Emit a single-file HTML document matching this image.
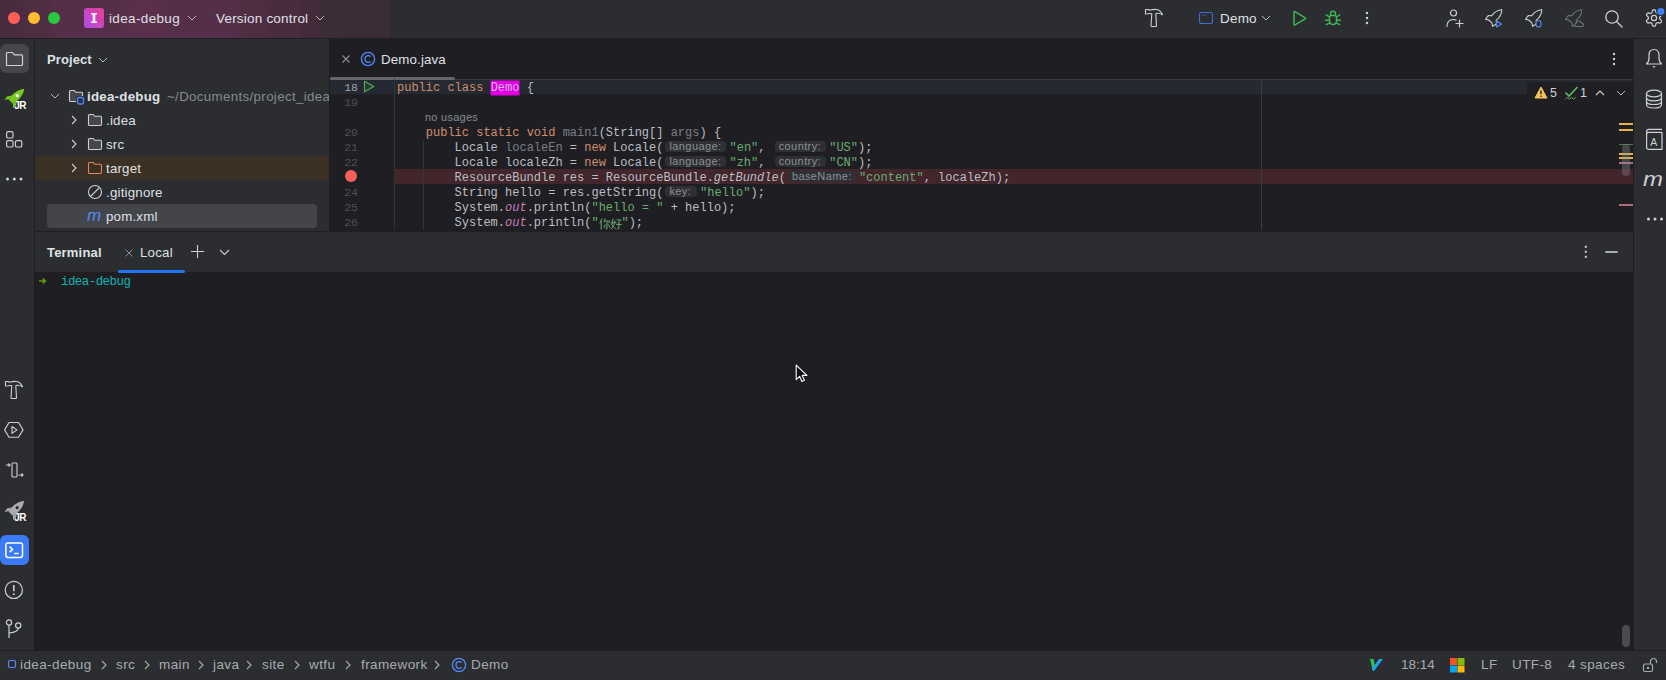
<!DOCTYPE html>
<html><head><meta charset="utf-8">
<style>
*{margin:0;padding:0;box-sizing:border-box}
html,body{width:1666px;height:680px;overflow:hidden;background:#1E1F22;font-family:"Liberation Sans",sans-serif;font-size:13px;color:#DFE1E5}
.a{position:absolute}
.mono{font-family:"Liberation Mono",monospace}
svg{position:absolute;overflow:visible}
#title{left:0;top:0;width:1666px;height:38px;background:#2B2D30}
#tgrad{left:0;top:0;width:390px;height:38px;background:radial-gradient(circle at 145px 19px,#5c304c 0px,#5a2f4b 18px,#552f49 24px,#552f49 88px,#4f2e44 98px,#4f2e44 115px,#4a2c40 124px,#4a2c40 150px,#452a3b 160px,#452a3b 170px,#3b2c37 180px,#3a2c36 245px)}
#tline{left:0;top:38px;width:1666px;height:1px;background:#1E1F22}
#lstrip{left:0;top:39px;width:34px;height:612px;background:#2B2D30}
#lline{left:34px;top:39px;width:1px;height:612px;background:#1E1F22}
#proj{left:35px;top:39px;width:294px;height:192px;background:#2B2D30}
#pline{left:329px;top:39px;width:1px;height:192px;background:#1E1F22}
#editor{left:330px;top:39px;width:1303px;height:192px;background:#1F1F23}
#rstrip{left:1634px;top:39px;width:32px;height:612px;background:#2B2D30}
#rline{left:1633px;top:39px;width:1px;height:612px;background:#1E1F22}
#hline{left:35px;top:231px;width:1598px;height:1px;background:#1E1F22}
#thead{left:35px;top:232px;width:1598px;height:40px;background:#2B2D30}
#tbody{left:35px;top:272px;width:1598px;height:379px;background:#1F1F23}
#status{left:0;top:651px;width:1666px;height:29px;background:#2B2D30}
#sline{left:0;top:650px;width:1666px;height:1px;background:#1E1F22}
.code{font-size:12px;line-height:15px;white-space:pre;color:#BCBEC4}
.hint{display:inline-block;position:relative;top:-2px;height:15px;vertical-align:top}
.hint::before{content:"";position:absolute;left:2px;right:3px;top:2px;bottom:2px;background:#2E3034;border-radius:4px;z-index:-1}
.code{z-index:1}
.hint{font-family:"Liberation Sans",sans-serif;font-size:11px;letter-spacing:0.4px;color:#8C8F94;text-indent:6px}
.hint{line-height:15px}
.cjk{display:inline-block;width:28.8px;height:15px;vertical-align:top}
.crumb{top:657px;font-size:13.5px;line-height:16px;color:#A8ABB0;white-space:nowrap;letter-spacing:0.4px}
</style></head><body>
<div id="title" class="a"></div>
<div id="tgrad" class="a"></div>
<div id="tline" class="a"></div>
<div id="lstrip" class="a"></div>
<div id="lline" class="a"></div>
<div id="proj" class="a"></div>
<div id="pline" class="a"></div>
<div id="editor" class="a"></div>
<div id="rstrip" class="a"></div>
<div id="rline" class="a"></div>
<div id="hline" class="a"></div>
<div id="thead" class="a"></div>
<div id="tbody" class="a"></div>
<div id="sline" class="a"></div>
<div id="status" class="a"></div>

<!-- title bar -->
<div class="a" style="left:8px;top:12px;width:12px;height:12px;border-radius:6px;background:#FF5F57"></div>
<div class="a" style="left:28px;top:12px;width:12px;height:12px;border-radius:6px;background:#FEBC2E"></div>
<div class="a" style="left:48px;top:12px;width:12px;height:12px;border-radius:6px;background:#28C840"></div>
<div class="a" style="left:84px;top:8px;width:20px;height:20px;border-radius:3px;background:linear-gradient(45deg,#B449D6 0%,#BC4AD6 30%,#CB4AD6 31%,#C548C6 50%,#D040B4 51%,#D640A8 75%,#DE44A6 76%,#E03FA0 100%)"></div>
<svg style="left:84px;top:8px" width="20" height="20"><path d="M7 5 L13 5 L13 6.4 L11.3 6.6 L11.3 13.4 L13 13.6 L13 15 L7 15 L7 13.6 L8.7 13.4 L8.7 6.6 L7 6.4 Z" fill="#FBEFFB"/></svg>
<div class="a" style="left:109px;top:11px;font-size:13.5px;letter-spacing:0.35px;line-height:16px">idea-debug</div>
<svg style="left:187px;top:15px" width="10" height="6"><path d="M1 1 L5 5 L9 1" fill="none" stroke="#B8BBC0" stroke-width="1"/></svg>
<div class="a" style="left:216px;top:11px;font-size:13.5px;letter-spacing:0.2px;line-height:16px">Version control</div>
<svg style="left:315px;top:15px" width="10" height="6"><path d="M1 1 L5 5 L9 1" fill="none" stroke="#B8BBC0" stroke-width="1"/></svg>

<!-- left strip -->
<div class="a" style="left:0px;top:44px;width:29px;height:29px;border-radius:6px;background:#45474C"></div>
<svg style="left:5px;top:51px" width="20" height="17"><path d="M1.5 13.5 L1.5 2.5 Q1.5 1.5 2.5 1.5 L7.5 1.5 L9.3 3.8 L16.5 3.8 Q17.5 3.8 17.5 4.8 L17.5 13.5 Q17.5 14.5 16.5 14.5 L2.5 14.5 Q1.5 14.5 1.5 13.5 Z" fill="none" stroke="#CED0D6" stroke-width="1.2" stroke-linejoin="round"/></svg>
<!-- JR rocket green -->
<svg style="left:0px;top:84px" width="30" height="30" viewBox="0 0 30 30">
<path d="M24.2 4.8 Q17.5 5.5 11.5 11.5 L8.5 15.5 L13 20 L17 17 Q23.5 11.5 24.2 4.8 Z" fill="#76C81F"/>
<path d="M11.5 11.5 L7 12.5 L4.5 16 L9 15 Z M17 17 L16 21.5 L13 24 L13 20 Z" fill="#76C81F"/>
<circle cx="17.2" cy="11.7" r="1.6" fill="#fff"/>
<text x="14.2" y="25.2" font-family="Liberation Sans" font-weight="bold" font-size="10" fill="#fff" letter-spacing="-0.5">JR</text>
</svg>
<!-- structure -->
<svg style="left:5px;top:130px" width="20" height="20"><g fill="none" stroke="#CED0D6" stroke-width="1.2"><rect x="1.6" y="1.6" width="6.4" height="6.4" rx="1.6"/><rect x="1.6" y="10.6" width="6.4" height="6.4" rx="1.6"/><rect x="10.4" y="10.6" width="6.4" height="6.4" rx="1.6"/></g></svg>
<svg style="left:5px;top:177px" width="20" height="4"><circle cx="2.5" cy="2" r="1.5" fill="#CED0D6"/><circle cx="9.3" cy="2" r="1.5" fill="#CED0D6"/><circle cx="16" cy="2" r="1.5" fill="#CED0D6"/></svg>
<!-- bottom icons -->
<svg style="left:0px;top:375px" width="30" height="30"><path d="M5.5 6.5 L8 6.5 Q9 7.3 10.5 7 Q13 6.2 16.5 6.5 Q20.5 7 22.5 11.8 Q19.5 10 17 10.3 L15.8 10.8 L16.5 22.8 Q16.5 23.5 15.8 23.5 L11.7 23.5 Q11 23.5 11 22.8 L11.8 10.8 Q10 10.2 8 10.8 L5.5 11 Z" fill="none" stroke="#CED0D6" stroke-width="1.1" stroke-linejoin="round"/></svg>
<svg style="left:4px;top:421px" width="22" height="18"><path d="M5 1.5 L14.5 1.5 L19 8.9 L14.5 16.3 L5 16.3 L0.6 8.9 Z" fill="none" stroke="#CED0D6" stroke-width="1.1" stroke-linejoin="round"/><path d="M8 5.5 L13 8.9 L8 12.3 Z" fill="none" stroke="#CED0D6" stroke-width="1.1" stroke-linejoin="round"/></svg>
<svg style="left:5px;top:461px" width="20" height="18"><rect x="7" y="2" width="5" height="14" rx="1" fill="none" stroke="#CED0D6" stroke-width="1.1"/><path d="M1 4 L5 4 M3.5 2.5 L5 4 L3.5 5.5 M13.5 14 L18 14 M16.5 12.5 L18 14 L16.5 15.5" fill="none" stroke="#CED0D6" stroke-width="1.1"/></svg>
<svg style="left:0px;top:496px" width="30" height="30" viewBox="0 0 30 30">
<path d="M24.2 4.8 Q17.5 5.5 11.5 11.5 L8.5 15.5 L13 20 L17 17 Q23.5 11.5 24.2 4.8 Z" fill="#A9ABB1"/>
<path d="M11.5 11.5 L7 12.5 L4.5 16 L9 15 Z M17 17 L16 21.5 L13 24 L13 20 Z" fill="#A9ABB1"/>
<circle cx="17.2" cy="11.7" r="1.6" fill="#2B2D30"/>
<text x="14.2" y="25.2" font-family="Liberation Sans" font-weight="bold" font-size="10" fill="#fff" letter-spacing="-0.5">JR</text>
</svg>
<div class="a" style="left:0px;top:535px;width:29px;height:29.5px;border-radius:6px;background:#3A7AF5"></div>
<svg style="left:5px;top:542px" width="19" height="17"><rect x="0.9" y="0.9" width="16.6" height="14.6" rx="2.2" fill="none" stroke="#FFFFFF" stroke-width="1.5"/><path d="M4.6 4.6 L7.6 7.4 L4.6 10.2 M9.2 11.4 L13.6 11.4" fill="none" stroke="#FFFFFF" stroke-width="1.5"/></svg>
<svg style="left:4px;top:580px" width="20" height="20"><circle cx="9.8" cy="9.9" r="8.6" fill="none" stroke="#CED0D6" stroke-width="1.2"/><path d="M9.8 5 L9.8 11.2" stroke="#CED0D6" stroke-width="1.6"/><circle cx="9.8" cy="14.3" r="1" fill="#CED0D6"/></svg>
<svg style="left:4px;top:618px" width="22" height="22"><g fill="none" stroke="#CED0D6" stroke-width="1.2"><circle cx="5" cy="4.5" r="2.6"/><circle cx="14.2" cy="7.5" r="2.6"/><path d="M5 7.1 L5 20 M14.2 10.1 Q14.2 14.5 5 15"/></g></svg>

<!-- project panel -->
<div class="a" style="left:47px;top:52px;font-size:13px;font-weight:bold;line-height:16px;letter-spacing:0.1px">Project</div>
<svg style="left:98px;top:57px" width="10" height="6"><path d="M1 1 L5 5 L9 1" fill="none" stroke="#B8BBC0" stroke-width="1"/></svg>
<div class="a" style="left:35px;top:156px;width:294px;height:24px;background:#3A3024"></div>
<div class="a" style="left:47px;top:204px;width:270px;height:24px;border-radius:4px;background:#43454A"></div>
<svg style="left:50px;top:93px" width="10" height="6"><path d="M1 1 L5 5 L9 1" fill="none" stroke="#B8BBC0" stroke-width="1"/></svg>
<svg style="left:68px;top:89px" width="18" height="17"><path d="M1.5 11 L1.5 2.5 Q1.5 1.5 2.5 1.5 L6.3 1.5 L7.8 3.3 L13.5 3.3 Q14.5 3.3 14.5 4.3 L14.5 11 Q14.5 12.5 13.5 12.5 L2.5 12.5 Q1.5 12.5 1.5 11.5 Z" fill="#45474C" stroke="#CED0D6" stroke-width="1.1" stroke-linejoin="round"/><rect x="8" y="7" width="9" height="9" rx="2" fill="#2B2D30"/><rect x="9.5" y="8.5" width="6" height="6.5" rx="1.5" fill="#25324D" stroke="#548AF7" stroke-width="1.3"/></svg>
<div class="a" style="left:87px;top:89px;font-size:13.3px;font-weight:bold;line-height:16px;letter-spacing:0.25px">idea-debug</div>
<div class="a" style="left:167px;top:89px;width:162px;overflow:hidden;white-space:nowrap;font-size:13.3px;line-height:16px;color:#868A91;letter-spacing:0.35px">~/Documents/project_idea</div>
<svg style="left:71px;top:115px" width="6" height="10"><path d="M1 1 L5 5 L1 9" fill="none" stroke="#CED0D6" stroke-width="1.1"/></svg>
<svg style="left:87px;top:113px" width="16" height="15"><path d="M1.5 11 L1.5 2.5 Q1.5 1.5 2.5 1.5 L6.3 1.5 L7.8 3.3 L13.5 3.3 Q14.5 3.3 14.5 4.3 L14.5 11 Q14.5 12.5 13.5 12.5 L2.5 12.5 Q1.5 12.5 1.5 11.5 Z" fill="#45474C" stroke="#CED0D6" stroke-width="1.1" stroke-linejoin="round"/></svg>
<div class="a" style="left:106px;top:113px;font-size:13.3px;line-height:16px;letter-spacing:0.2px">.idea</div>
<svg style="left:71px;top:139px" width="6" height="10"><path d="M1 1 L5 5 L1 9" fill="none" stroke="#CED0D6" stroke-width="1.1"/></svg>
<svg style="left:87px;top:137px" width="16" height="15"><path d="M1.5 11 L1.5 2.5 Q1.5 1.5 2.5 1.5 L6.3 1.5 L7.8 3.3 L13.5 3.3 Q14.5 3.3 14.5 4.3 L14.5 11 Q14.5 12.5 13.5 12.5 L2.5 12.5 Q1.5 12.5 1.5 11.5 Z" fill="#45474C" stroke="#CED0D6" stroke-width="1.1" stroke-linejoin="round"/></svg>
<div class="a" style="left:106px;top:137px;font-size:13.3px;line-height:16px;letter-spacing:0.2px">src</div>
<svg style="left:71px;top:163px" width="6" height="10"><path d="M1 1 L5 5 L1 9" fill="none" stroke="#CED0D6" stroke-width="1.1"/></svg>
<svg style="left:87px;top:161px" width="16" height="15"><path d="M1.5 11 L1.5 2.5 Q1.5 1.5 2.5 1.5 L6.3 1.5 L7.8 3.3 L13.5 3.3 Q14.5 3.3 14.5 4.3 L14.5 11 Q14.5 12.5 13.5 12.5 L2.5 12.5 Q1.5 12.5 1.5 11.5 Z" fill="#3A3024" stroke="#E08855" stroke-width="1.1" stroke-linejoin="round"/></svg>
<div class="a" style="left:106px;top:161px;font-size:13.3px;line-height:16px;letter-spacing:0.2px">target</div>
<svg style="left:87px;top:184px" width="16" height="16"><circle cx="8" cy="8" r="6.5" fill="none" stroke="#CED0D6" stroke-width="1.1"/><path d="M3.5 12.5 L12.5 3.5" stroke="#CED0D6" stroke-width="1.1"/></svg>
<div class="a" style="left:106px;top:185px;font-size:13.3px;line-height:16px;letter-spacing:0.2px">.gitignore</div>
<div class="a" style="left:87px;top:207px;font-size:17px;font-style:italic;line-height:18px;color:#548AF7;letter-spacing:-0.5px">m</div>
<div class="a" style="left:106px;top:209px;font-size:13.3px;line-height:16px;letter-spacing:0.2px">pom.xml</div>

<!-- editor tabs -->
<svg style="left:341px;top:54px" width="10" height="10"><path d="M1.5 1.5 L8.5 8.5 M8.5 1.5 L1.5 8.5" stroke="#8C8F94" stroke-width="1.1"/></svg>
<svg style="left:360px;top:51px" width="16" height="16"><circle cx="8" cy="8" r="6.6" fill="none" stroke="#548AF7" stroke-width="1.3"/><path d="M10.6 5.6 Q9.8 4.6 8.2 4.6 Q5 4.6 5 8 Q5 11.4 8.2 11.4 Q9.8 11.4 10.6 10.4" fill="none" stroke="#548AF7" stroke-width="1.3"/></svg>
<div class="a" style="left:381px;top:52px;font-size:13.3px;line-height:16px;letter-spacing:0.15px">Demo.java</div>
<svg style="left:1612px;top:52px" width="4" height="14"><circle cx="2" cy="2" r="1.2" fill="#CED0D6"/><circle cx="2" cy="7" r="1.2" fill="#CED0D6"/><circle cx="2" cy="12" r="1.2" fill="#CED0D6"/></svg>
<div class="a" style="left:330px;top:79px;width:1303px;height:1px;background:#393B40"></div>
<div class="a" style="left:330px;top:77px;width:125px;height:3px;border-radius:1.5px;background:#62656B"></div>
<!-- current line / breakpoint line -->
<div class="a" style="left:330px;top:80px;width:1303px;height:14px;background:#252932"></div>
<div class="a" style="left:395px;top:169px;width:1238px;height:15px;background:#42262C"></div>
<div class="a" style="left:394px;top:79px;width:1px;height:151px;background:#313438"></div>
<div class="a" style="left:423px;top:140px;width:1px;height:90px;background:#313438"></div>
<div class="a" style="left:1261px;top:79px;width:1px;height:151px;background:#393B40"></div>
<div class="a mono" style="left:335px;top:80px;width:23px;text-align:right;font-size:11.5px;line-height:15px;color:#A1A3AB">18</div>
<div class="a mono" style="left:335px;top:95px;width:23px;text-align:right;font-size:11.5px;line-height:15px;color:#4B5059">19</div>
<div class="a mono" style="left:335px;top:125px;width:23px;text-align:right;font-size:11.5px;line-height:15px;color:#4B5059">20</div>
<div class="a mono" style="left:335px;top:140px;width:23px;text-align:right;font-size:11.5px;line-height:15px;color:#4B5059">21</div>
<div class="a mono" style="left:335px;top:155px;width:23px;text-align:right;font-size:11.5px;line-height:15px;color:#4B5059">22</div>
<div class="a mono" style="left:335px;top:185px;width:23px;text-align:right;font-size:11.5px;line-height:15px;color:#4B5059">24</div>
<div class="a mono" style="left:335px;top:200px;width:23px;text-align:right;font-size:11.5px;line-height:15px;color:#4B5059">25</div>
<div class="a mono" style="left:335px;top:215px;width:23px;text-align:right;font-size:11.5px;line-height:15px;color:#4B5059">26</div>
<svg style="left:363px;top:80px" width="13" height="13"><path d="M1.5 1.3 L10.8 6.5 L1.5 11.7 Z" fill="#253D2C" stroke="#57A860" stroke-width="1.1" stroke-linejoin="round"/></svg>
<div class="a" style="left:345px;top:170px;width:12px;height:12px;border-radius:6px;background:#F55F5A"></div>
<div class="a mono code" style="left:397px;top:81px"><span style="color:#CF8E6D;">public class </span><span style="background:#E100E1;color:#D8B4E6;box-shadow:0 0 0 0.5px #E100E1">Demo</span><span style=""> {</span></div>
<div class="a mono code" style="left:397px;top:126px">    <span style="color:#CF8E6D;">public static void </span><span style="color:#7A7E85;">main1</span><span style="">(String[] </span><span style="color:#7A7E85;">args</span><span style="">) {</span></div>
<div class="a mono code" style="left:397px;top:141px">        <span style="">Locale </span><span style="color:#7A7E85;">localeEn</span><span style=""> = </span><span style="color:#CF8E6D;">new </span><span style="">Locale(</span><span class="hint" style="width:66px">language:</span><span style="color:#6AAB73;">"en"</span><span style="">, </span><span class="hint" style="width:56.5px">country:</span><span style="color:#6AAB73;">"US"</span><span style="">);</span></div>
<div class="a mono code" style="left:397px;top:156px">        <span style="">Locale localeZh = </span><span style="color:#CF8E6D;">new </span><span style="">Locale(</span><span class="hint" style="width:66px">language:</span><span style="color:#6AAB73;">"zh"</span><span style="">, </span><span class="hint" style="width:56.5px">country:</span><span style="color:#6AAB73;">"CN"</span><span style="">);</span></div>
<div class="a mono code" style="left:397px;top:171px">        <span style="">ResourceBundle res = ResourceBundle.</span><span style="color:#BCBEC4;font-style:italic;">getBundle</span><span style="">(</span><span class="hint" style="width:73px">baseName:</span><span style="color:#6AAB73;">"content"</span><span style="">, localeZh);</span></div>
<div class="a mono code" style="left:397px;top:186px">        <span style="">String hello = res.getString(</span><span class="hint" style="width:36.6px">key:</span><span style="color:#6AAB73;">"hello"</span><span style="">);</span></div>
<div class="a mono code" style="left:397px;top:201px">        <span style="">System.</span><span style="color:#C77DBB;font-style:italic;">out</span><span style="">.println(</span><span style="color:#6AAB73;">"hello = "</span><span style=""> + hello);</span></div>
<div class="a mono code" style="left:397px;top:216px">        <span style="">System.</span><span style="color:#C77DBB;font-style:italic;">out</span><span style="">.println(</span><span style="color:#6AAB73;">"</span><svg style="position:relative;display:inline-block;vertical-align:top;top:2px" width="22.8" height="12" viewBox="0 0 23 12"><g fill="none" stroke="#6AAB73" stroke-width="1" stroke-linecap="round"><path d="M3 0.8 L1 5 M2.2 3.5 L2.2 11.2 M6.2 0.8 L5 3.8 M5.6 3 L10.8 3 L10 4.8 M8 4 L8 11 L7 10.5 M6.2 6.8 L5 9.6 M9.8 6.8 L11 9.6"/><path d="M14.2 0.8 L12.8 7 Q15 9 17 11.2 M12.2 4.8 L17.2 4.8 M16.2 2.8 Q15.5 8 12.4 11.2 M18.2 1.8 L22 1.8 L20 4.2 M20 4.2 L20 11 L19 10.6 M17.8 6.4 L22.6 6.4"/></g></svg><span style="color:#6AAB73;">"</span><span style="">);</span></div>
<div class="a" style="left:425px;top:110px;font-size:11px;line-height:15px;color:#868A91;letter-spacing:0.25px">no usages</div>

<!-- toolbar right -->
<svg style="left:1140px;top:3px" width="30" height="30"><path d="M5.5 6.5 L8 6.5 Q9 7.3 10.5 7 Q13 6.2 16.5 6.5 Q20.5 7 22.5 11.8 Q19.5 10 17 10.3 L15.8 10.8 L16.5 22.8 Q16.5 23.5 15.8 23.5 L11.7 23.5 Q11 23.5 11 22.8 L11.8 10.8 Q10 10.2 8 10.8 L5.5 11 Z" fill="none" stroke="#CED0D6" stroke-width="1.1" stroke-linejoin="round"/></svg>
<svg style="left:1198px;top:11px" width="16" height="14"><rect x="1.5" y="1.5" width="13" height="11" rx="2" fill="none" stroke="#3F6FD1" stroke-width="1.1"/><path d="M4 4.2 L5.5 4.2 M6.8 4.2 L8.3 4.2" stroke="#3F6FD1" stroke-width="0.9"/></svg>
<div class="a" style="left:1220px;top:11px;font-size:13.5px;line-height:16px;letter-spacing:0.2px">Demo</div>
<svg style="left:1261px;top:15px" width="10" height="6"><path d="M1 1 L5 5 L9 1" fill="none" stroke="#B8BBC0" stroke-width="1"/></svg>
<svg style="left:1291px;top:9px" width="18" height="18"><path d="M3 3.3 Q3 2.2 4 2.7 L14.2 8.8 Q15 9.3 14.2 9.8 L4 15.9 Q3 16.4 3 15.3 Z" fill="none" stroke="#3FB553" stroke-width="1.5" stroke-linejoin="round"/></svg>
<svg style="left:1324px;top:9px" width="18" height="18"><g fill="none" stroke="#3FB553" stroke-width="1.4" stroke-linecap="round" stroke-linejoin="round"><path d="M6.5 6 L6.5 4.8 Q6.5 2.2 9 2.2 Q11.5 2.2 11.5 4.8 L11.5 6"/><path d="M5.5 8.5 Q5.5 6.5 7.5 6.5 L10.5 6.5 Q12.5 6.5 12.5 8.5 L12.5 11.5 Q12.5 15.5 9 15.5 Q5.5 15.5 5.5 11.5 Z"/><path d="M5.5 8 L2.3 5.8 M12.5 8 L15.7 5.8 M5.5 11.2 L1.5 11.2 M12.5 11.2 L16.5 11.2 M5.8 13.8 L2.3 15.6 M12.2 13.8 L15.7 15.6"/></g></svg>
<svg style="left:1365px;top:11px" width="4" height="14"><circle cx="2" cy="2" r="1.25" fill="#CED0D6"/><circle cx="2" cy="7" r="1.25" fill="#CED0D6"/><circle cx="2" cy="12" r="1.25" fill="#CED0D6"/></svg>
<svg style="left:1445px;top:8px" width="20" height="20"><g fill="none" stroke="#CED0D6" stroke-width="1.2" stroke-linecap="round"><circle cx="8.5" cy="5" r="3"/><path d="M2 18.5 Q2 11.5 8.5 11.5 Q10 11.5 11 12"/><path d="M11 15.5 L18 15.5 M14.5 12 L14.5 19"/></g></svg>
<svg style="left:1484px;top:8px" width="20" height="20"><g fill="none" stroke="#CED0D6" stroke-width="1.1" stroke-linejoin="round"><path d="M17.8 1.8 Q17.6 8 12.2 12.3 L12.4 15.2 Q12.4 16 11.6 16.5 L8.6 18.3 L8 15.2 L4.8 12 L1.7 11.4 L3.4 8.5 Q4 7.6 5 7.6 L7.7 7.8 Q12 2 17.8 1.8 Z"/></g><path d="M12.5 13 L17.5 16 L12.5 19 Z" fill="#2B2D30" stroke="#548AF7" stroke-width="1.2" stroke-linejoin="round"/></svg>
<svg style="left:1524px;top:8px" width="20" height="20"><g fill="none" stroke="#CED0D6" stroke-width="1.1" stroke-linejoin="round"><path d="M17.8 1.8 Q17.6 8 12.2 12.3 L12.4 15.2 Q12.4 16 11.6 16.5 L8.6 18.3 L8 15.2 L4.8 12 L1.7 11.4 L3.4 8.5 Q4 7.6 5 7.6 L7.7 7.8 Q12 2 17.8 1.8 Z"/></g><rect x="12" y="12.5" width="5" height="6.5" rx="2.5" fill="#2B2D30" stroke="#548AF7" stroke-width="1.2"/></svg>
<svg style="left:1564px;top:8px" width="20" height="20"><g fill="none" stroke="#6F737A" stroke-width="1.1" stroke-linejoin="round"><path d="M17.8 1.8 Q17.6 8 12.2 12.3 L12.4 15.2 Q12.4 16 11.6 16.5 L8.6 18.3 L8 15.2 L4.8 12 L1.7 11.4 L3.4 8.5 Q4 7.6 5 7.6 L7.7 7.8 Q12 2 17.8 1.8 Z"/></g><path d="M11.5 18.5 L18 18.5 Q19.5 18.5 19.5 17 Q19.5 15 17.5 15 Q16.8 13 14.8 13 Q12.5 13 12.3 15.2 Q10.8 15.5 10.8 17 Q10.8 18.5 11.5 18.5 Z" fill="#2B2D30" stroke="#6F737A" stroke-width="1.1"/></svg>

<svg style="left:1604px;top:9px" width="20" height="20"><g fill="none" stroke="#CED0D6" stroke-width="1.3" stroke-linecap="round"><circle cx="8" cy="8" r="6.2"/><path d="M12.5 12.5 L18 18"/></g></svg>
<svg style="left:1644px;top:8px" width="22" height="22"><path d="M15.60 10.00 L15.61 10.29 L15.64 10.59 L15.75 10.91 L16.07 11.29 L16.66 11.79 L17.22 12.35 L17.45 12.86 L17.43 13.31 L17.29 13.72 L17.10 14.10 L16.87 14.46 L16.58 14.78 L16.20 15.02 L15.64 15.08 L14.88 14.88 L14.15 14.61 L13.66 14.52 L13.33 14.59 L13.06 14.71 L12.80 14.85 L12.55 15.00 L12.31 15.18 L12.09 15.44 L11.92 15.90 L11.79 16.66 L11.58 17.43 L11.25 17.88 L10.85 18.09 L10.43 18.18 L10.00 18.20 L9.57 18.18 L9.15 18.09 L8.75 17.88 L8.42 17.43 L8.21 16.66 L8.08 15.90 L7.91 15.44 L7.69 15.18 L7.45 15.00 L7.20 14.85 L6.94 14.71 L6.67 14.59 L6.34 14.52 L5.85 14.61 L5.12 14.88 L4.36 15.08 L3.80 15.02 L3.42 14.78 L3.13 14.46 L2.90 14.10 L2.71 13.72 L2.57 13.31 L2.55 12.86 L2.78 12.35 L3.34 11.79 L3.93 11.29 L4.25 10.91 L4.36 10.59 L4.39 10.29 L4.40 10.00 L4.39 9.71 L4.36 9.41 L4.25 9.09 L3.93 8.71 L3.34 8.21 L2.78 7.65 L2.55 7.14 L2.57 6.69 L2.71 6.28 L2.90 5.90 L3.13 5.54 L3.42 5.22 L3.80 4.98 L4.36 4.92 L5.12 5.12 L5.85 5.39 L6.34 5.48 L6.67 5.41 L6.94 5.29 L7.20 5.15 L7.45 5.00 L7.69 4.82 L7.91 4.56 L8.08 4.10 L8.21 3.34 L8.42 2.57 L8.75 2.12 L9.15 1.91 L9.57 1.82 L10.00 1.80 L10.43 1.82 L10.85 1.91 L11.25 2.12 L11.58 2.57 L11.79 3.34 L11.92 4.10 L12.09 4.56 L12.31 4.82 L12.55 5.00 L12.80 5.15 L13.06 5.29 L13.33 5.41 L13.66 5.48 L14.15 5.39 L14.88 5.12 L15.64 4.92 L16.20 4.98 L16.58 5.22 L16.87 5.54 L17.10 5.90 L17.29 6.28 L17.43 6.69 L17.45 7.14 L17.22 7.65 L16.66 8.21 L16.07 8.71 L15.75 9.09 L15.64 9.41 L15.61 9.71 Z" fill="none" stroke="#CED0D6" stroke-width="1.2" stroke-linejoin="round"/><circle cx="10" cy="10" r="2.6" fill="none" stroke="#CED0D6" stroke-width="1.2"/><circle cx="16.8" cy="3.5" r="4.6" fill="#2B2D30"/><circle cx="16.8" cy="3.5" r="3.6" fill="#3D80F5"/></svg>
<!-- right strip -->
<svg style="left:1644px;top:47px" width="20" height="22"><g fill="none" stroke="#CED0D6" stroke-width="1.2" stroke-linejoin="round"><path d="M2.5 17 Q5 15 5 11 L5 8.5 Q5 2.5 10 2.5 Q15 2.5 15 8.5 L15 11 Q15 15 17.5 17 Z"/></g><path d="M8.3 19.3 L11.7 19.3 L10 21 Z" fill="#CED0D6"/></svg>
<svg style="left:1644px;top:88px" width="20" height="22"><g fill="none" stroke="#CED0D6" stroke-width="1.2"><ellipse cx="10" cy="5.5" rx="7.5" ry="3.3"/><path d="M2.5 5.5 L2.5 16.5 Q2.5 20 10 20 Q17.5 20 17.5 16.5 L17.5 5.5 M2.5 9.5 Q2.5 12.8 10 12.8 Q17.5 12.8 17.5 9.5 M2.5 13.2 Q2.5 16.5 10 16.5 Q17.5 16.5 17.5 13.2"/></g></svg>
<svg style="left:1644px;top:127px" width="20" height="24"><g fill="none" stroke="#CED0D6" stroke-width="1.2" stroke-linejoin="round"><path d="M4.8 2.3 L18 2.3 M18 5.3 L4.8 5.3 Q2.6 5.3 2.6 7.5 L2.6 20.3 Q2.6 22.4 4.8 22.4 L18 22.4 L18 5.3 M2.6 7.5 L2.6 4.5 Q2.6 2.3 4.8 2.3"/></g><text x="6.3" y="19" font-family="Liberation Sans" font-size="10.5" fill="#CED0D6">A</text></svg>
<div class="a" style="left:1643px;top:166px;font-size:24px;font-style:italic;line-height:24px;color:#CED0D6;transform:scaleY(0.88);transform-origin:0 100%">m</div>
<svg style="left:1645.5px;top:217px" width="20" height="4"><circle cx="2.5" cy="2" r="1.5" fill="#CED0D6"/><circle cx="9" cy="2" r="1.5" fill="#CED0D6"/><circle cx="15.5" cy="2" r="1.5" fill="#CED0D6"/></svg>
<!-- inspection widget -->
<div class="a" style="left:1527px;top:82px;width:106px;height:21px;border-radius:5px 0 0 5px;background:#1F1F23"></div>
<svg style="left:1534px;top:86px" width="14" height="13"><path d="M7 1 L13 12 L1 12 Z" fill="#F2C55C" stroke="#F2C55C" stroke-width="1" stroke-linejoin="round"/><path d="M7 4.5 L7 8.3" stroke="#1E1F22" stroke-width="1.4"/><circle cx="7" cy="10.2" r="0.8" fill="#1E1F22"/></svg>
<div class="a" style="left:1550px;top:85px;font-size:12.5px;line-height:16px;color:#CED0D6">5</div>
<svg style="left:1564px;top:85px" width="16" height="16"><path d="M1.5 7.5 L5 11 L13.5 2" fill="none" stroke="#5FB865" stroke-width="1.6"/><path d="M1.5 14 L3.5 12.5 L5.5 14 L7.5 12.5 L9.5 14 L11.5 12.5" fill="none" stroke="#5FB865" stroke-width="1"/></svg>
<div class="a" style="left:1580px;top:85px;font-size:12.5px;line-height:16px;color:#CED0D6">1</div>
<svg style="left:1595px;top:90px" width="10" height="6"><path d="M1 5 L5 1 L9 5" fill="none" stroke="#CED0D6" stroke-width="1.1"/></svg>
<svg style="left:1616px;top:90px" width="10" height="6"><path d="M1 1 L5 5 L9 1" fill="none" stroke="#B8BBC0" stroke-width="1"/></svg>
<!-- error stripe markers -->
<div class="a" style="left:1619px;top:123px;width:14px;height:2px;background:#E5B544"></div>
<div class="a" style="left:1619px;top:129px;width:14px;height:2px;background:#E5B544"></div>
<div class="a" style="left:1619px;top:144px;width:14px;height:1px;background:#4F7A5A"></div>
<div class="a" style="left:1619px;top:153px;width:14px;height:2px;background:#E5B544"></div>
<div class="a" style="left:1619px;top:157px;width:14px;height:2px;background:#E5B544"></div>
<div class="a" style="left:1619px;top:162px;width:14px;height:2px;background:#B06A7A"></div>
<div class="a" style="left:1619px;top:204px;width:14px;height:2px;background:#B06A7A"></div>
<div class="a" style="left:1622px;top:144px;width:8px;height:32px;border-radius:4px;background:rgba(140,143,150,0.35)"></div>

<!-- terminal -->
<div class="a" style="left:47px;top:245px;font-size:13px;font-weight:bold;line-height:16px;letter-spacing:0.2px">Terminal</div>
<svg style="left:124px;top:248px" width="10" height="10"><path d="M1.5 1.5 L8.5 8.5 M8.5 1.5 L1.5 8.5" stroke="#868A91" stroke-width="1"/></svg>
<div class="a" style="left:140px;top:245px;font-size:13.3px;line-height:16px;letter-spacing:0.2px">Local</div>
<div class="a" style="left:118px;top:270px;width:67px;height:3px;border-radius:1.5px;background:#2277F7"></div>
<svg style="left:190px;top:244px" width="16" height="16"><path d="M7.5 1 L7.5 14 M1 7.5 L14 7.5" stroke="#CED0D6" stroke-width="1.1"/></svg>
<svg style="left:219px;top:249px" width="11" height="7"><path d="M1 1 L5.5 5.5 L10 1" fill="none" stroke="#CED0D6" stroke-width="1.1"/></svg>
<svg style="left:1584px;top:245px" width="4" height="14"><rect x="0.8" y="0.8" width="2" height="2" fill="#CED0D6"/><rect x="0.8" y="5.8" width="2" height="2" fill="#CED0D6"/><rect x="0.8" y="10.8" width="2" height="2" fill="#CED0D6"/></svg>
<div class="a" style="left:1605px;top:251px;width:13px;height:2px;border-radius:1px;background:#A8ABB0"></div>
<svg style="left:38px;top:277px" width="10" height="8"><path d="M1 4 L7.3 4 M4.8 1.6 L7.4 4 L4.8 6.4" fill="none" stroke="#58A00A" stroke-width="1.5"/></svg>
<div class="a mono" style="left:61px;top:274.5px;font-size:12.4px;letter-spacing:-0.5px;line-height:15px;color:#12B3B0">idea-debug</div>
<div class="a" style="left:1622px;top:625px;width:8px;height:22px;border-radius:4px;background:#4A4C51"></div>
<!-- status bar -->
<svg style="left:7px;top:659px" width="10" height="10"><rect x="1.5" y="1.5" width="7" height="7" rx="1.5" fill="none" stroke="#548AF7" stroke-width="1.2"/></svg>
<div class="a crumb" style="left:20px;width:75px">idea-debug</div>
<div class="a crumb" style="left:116px;width:22px">src</div>
<div class="a crumb" style="left:159px;width:33px">main</div>
<div class="a crumb" style="left:213px;width:28px">java</div>
<div class="a crumb" style="left:262px;width:26px">site</div>
<div class="a crumb" style="left:309px;width:31px">wtfu</div>
<div class="a crumb" style="left:361px;width:70px">framework</div>
<svg style="left:101px;top:660px" width="6" height="10"><path d="M1 1 L5 5 L1 9" fill="none" stroke="#A8ABB0" stroke-width="1.1"/></svg>
<svg style="left:144px;top:660px" width="6" height="10"><path d="M1 1 L5 5 L1 9" fill="none" stroke="#A8ABB0" stroke-width="1.1"/></svg>
<svg style="left:198px;top:660px" width="6" height="10"><path d="M1 1 L5 5 L1 9" fill="none" stroke="#A8ABB0" stroke-width="1.1"/></svg>
<svg style="left:246px;top:660px" width="6" height="10"><path d="M1 1 L5 5 L1 9" fill="none" stroke="#A8ABB0" stroke-width="1.1"/></svg>
<svg style="left:294px;top:660px" width="6" height="10"><path d="M1 1 L5 5 L1 9" fill="none" stroke="#A8ABB0" stroke-width="1.1"/></svg>
<svg style="left:345px;top:660px" width="6" height="10"><path d="M1 1 L5 5 L1 9" fill="none" stroke="#A8ABB0" stroke-width="1.1"/></svg>
<svg style="left:434px;top:660px" width="6" height="10"><path d="M1 1 L5 5 L1 9" fill="none" stroke="#A8ABB0" stroke-width="1.1"/></svg>

<svg style="left:451px;top:657px" width="16" height="16"><circle cx="8" cy="8" r="6.6" fill="none" stroke="#548AF7" stroke-width="1.3"/><path d="M10.6 5.6 Q9.8 4.6 8.2 4.6 Q5 4.6 5 8 Q5 11.4 8.2 11.4 Q9.8 11.4 10.6 10.4" fill="none" stroke="#548AF7" stroke-width="1.3"/></svg>
<div class="a crumb" style="left:471px">Demo</div>
<svg style="left:1369px;top:657px" width="15" height="15"><path d="M1 2 L4.5 2 L6.5 11 L4 14 Z" fill="#2BC84C"/><path d="M10 2 L14 2 L5 14 L4 14 L3 12 Z" fill="#1EA0F0"/></svg>
<div class="a crumb" style="left:1401px;letter-spacing:0px">18:14</div>
<svg style="left:1450px;top:658px" width="15" height="15"><rect x="0" y="0" width="7" height="7" fill="#F35325"/><rect x="7.5" y="0" width="7" height="7" fill="#81BC06"/><rect x="0" y="7.5" width="7" height="7" fill="#05A6F0"/><rect x="7.5" y="7.5" width="7" height="7" fill="#FFBA08"/></svg>
<div class="a crumb" style="left:1481px">LF</div>
<div class="a crumb" style="left:1512px">UTF-8</div>
<div class="a crumb" style="left:1568px">4 spaces</div>
<svg style="left:1642px;top:657px" width="16" height="16"><rect x="1.5" y="7" width="9" height="7.5" rx="1.5" fill="none" stroke="#A8ABB0" stroke-width="1.1"/><path d="M8.5 7 L8.5 4.5 Q8.5 1.5 11.5 1.5 Q14.5 1.5 14.5 4.5 L14.5 6" fill="none" stroke="#A8ABB0" stroke-width="1.1"/><rect x="5" y="10" width="2" height="2" fill="#A8ABB0"/></svg>
<svg style="left:795px;top:364px" width="14" height="20"><path d="M1.2 1.2 L1.2 15.6 L4.6 12.3 L6.9 17.4 L9.4 16.3 L7.2 11.4 L11.9 11.4 Z" fill="#111" stroke="#fff" stroke-width="1.1" stroke-linejoin="round"/></svg>
<!--CONTENT-->
</body></html>
